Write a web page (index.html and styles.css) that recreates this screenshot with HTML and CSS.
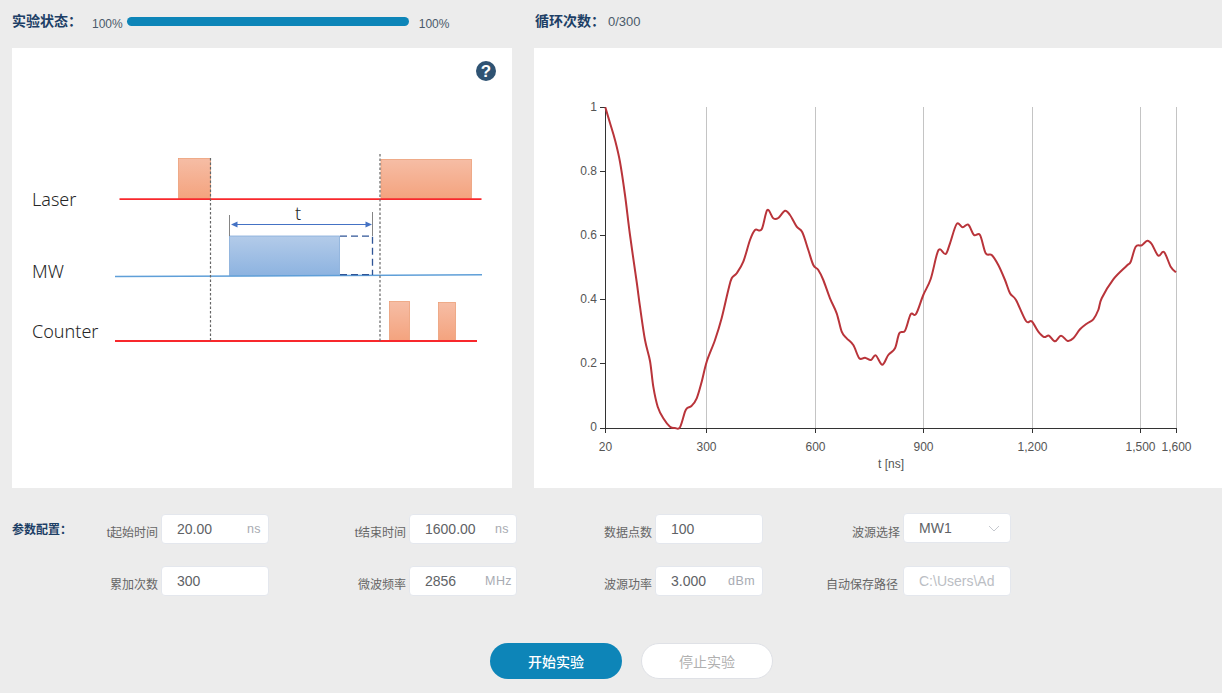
FILE: index.html
```html
<!DOCTYPE html>
<html lang="zh-CN">
<head>
  <meta charset="UTF-8" />
  <title>实验</title>
  <link rel="stylesheet" href="styles.css">
</head>
<body>
  <header class="status">
    <div class="status-left">
      <span class="title">实验状态：</span>
      <span class="pct">100%</span>
      <div class="bar"></div>
      <span class="pct pct-end">100%</span>
    </div>
    <div class="status-right">
      <span class="title">循环次数：</span>
      <span class="pct">0/300</span>
    </div>
  </header>

  <main class="panels">
    <section class="panel panel-seq">
      <svg class="seq" viewBox="12 48 500 440" width="500" height="440">
        <defs>
          <linearGradient id="orange" x1="0" y1="0" x2="0" y2="1">
            <stop offset="0" stop-color="#f6bda5"/>
            <stop offset="1" stop-color="#f4a37e"/>
          </linearGradient>
          <linearGradient id="blue" x1="0" y1="0" x2="0" y2="1">
            <stop offset="0" stop-color="#b3cbe9"/>
            <stop offset="1" stop-color="#8db3e0"/>
          </linearGradient>
        </defs>

        <circle cx="486" cy="71" r="10" fill="#2f5373"/>
        <text class="help" x="486" y="77" text-anchor="middle">?</text>

        <text class="seq-label" x="32" y="206">Laser</text>
        <text class="seq-label" x="32" y="278">MW</text>
        <text class="seq-label" x="32" y="338">Counter</text>

        <rect class="pulse" x="178.5" y="158.5" width="32" height="40"/>
        <rect class="pulse" x="381" y="159.5" width="90.5" height="39"/>
        <rect class="pulse" x="389.5" y="301.5" width="20" height="39"/>
        <rect class="pulse" x="438.5" y="302.5" width="17" height="38"/>
        <rect x="229.5" y="236" width="110" height="39.5" fill="url(#blue)" stroke="#85acd9" stroke-width="0.8"/>

        <path class="red-line" d="M119.5 199.2H481.5"/>
        <path class="red-line" d="M115 341H477"/>
        <path class="blue-line" d="M115 276.6L482 274.8"/>

        <path class="dash" d="M340 236.2H372.5V275M340 274.7H372"/>
        <path class="tick" d="M229.5 215V236M372.5 212V236"/>
        <path class="arrow" d="M236 224.5H367"/>
        <path d="M231 224.5L237.5 221.5V227.5Z" fill="#4472c4"/>
        <path d="M372 224.5L365.5 221.5V227.5Z" fill="#4472c4"/>
        <text class="seq-t" x="298" y="220" text-anchor="middle">t</text>

        <path class="dots" d="M210.5 158V341M380 154V341"/>
      </svg>
    </section>

    <section class="panel panel-chart">
      <svg class="chart" viewBox="534 48 688 440" width="688" height="440">
        <path class="split" d="M706.5 107V428M815.5 107V428M923.5 107V428M1032.5 107V428M1140.5 107V428M1176.5 107V428"/>
        <path class="axis" d="M605.5 107V428.5M600 107.5H605.5M600 171.5H605.5M600 235.5H605.5M600 299.5H605.5M600 363.5H605.5M600 428.5H1176.5"/>
        <path class="axis" d="M605.5 428V433M706.5 428V433M815.5 428V433M923.5 428V433M1032.5 428V433M1140.5 428V433M1176.5 428V433"/>

        <g class="y-labels">
          <text x="597" y="111">1</text>
          <text x="597" y="175">0.8</text>
          <text x="597" y="239">0.6</text>
          <text x="597" y="303">0.4</text>
          <text x="597" y="367">0.2</text>
          <text x="597" y="431">0</text>
        </g>
        <g class="x-labels">
          <text x="605.5" y="451">20</text>
          <text x="706.5" y="451">300</text>
          <text x="815.5" y="451">600</text>
          <text x="923.5" y="451">900</text>
          <text x="1032.5" y="451">1,200</text>
          <text x="1140.5" y="451">1,500</text>
          <text x="1176.5" y="451">1,600</text>
          <text x="891" y="468">t [ns]</text>
        </g>

        <path id="curve" class="curve"/>
      </svg>
    </section>
  </main>

  <section class="params">
    <div class="title params-title">参数配置：</div>
    <div class="params-grid">
      <div class="cell">
        <label>t起始时间</label>
        <div class="field"><input value="20.00"><span class="unit">ns</span></div>
      </div>
      <div class="cell">
        <label>t结束时间</label>
        <div class="field"><input value="1600.00"><span class="unit">ns</span></div>
      </div>
      <div class="cell">
        <label>数据点数</label>
        <div class="field"><input value="100"></div>
      </div>
      <div class="cell">
        <label>波源选择</label>
        <div class="field field-select">
          <input value="MW1">
          <svg class="caret" width="12" height="7" viewBox="0 0 12 7"><path d="M1 1L6 6L11 1" fill="none" stroke="#c6c9cf"/></svg>
        </div>
      </div>
      <div class="cell">
        <label>累加次数</label>
        <div class="field"><input value="300"></div>
      </div>
      <div class="cell">
        <label>微波频率</label>
        <div class="field"><input value="2856"><span class="unit unit-wide">MHz</span></div>
      </div>
      <div class="cell">
        <label>波源功率</label>
        <div class="field"><input value="3.000"><span class="unit">dBm</span></div>
      </div>
      <div class="cell">
        <label class="label-path">自动保存路径</label>
        <div class="field"><input placeholder="C:\Users\Ad"></div>
      </div>
    </div>
  </section>

  <div class="actions">
    <button class="btn btn-start">开始实验</button>
    <button class="btn btn-stop">停止实验</button>
  </div>

  <script src="chart.js"></script>
</body>
</html>
```

FILE: styles.css
```css
* {
  box-sizing: border-box;
}

html, body {
  height: 100%;
}

body {
  margin: 0;
  overflow: hidden;
  background-color: #ececec;
  font-family: "Liberation Sans", "Noto Sans CJK SC", sans-serif;
  color: #606266;
}

.status {
  display: flex;
  height: 48px;
  padding-left: 12px;
  padding-top: 14px;
}

.status-left {
  display: flex;
  align-items: flex-start;
  width: 523px;
}

.status-right {
  display: flex;
  align-items: flex-start;
}

.title {
  font-size: 14px;
  font-weight: 700;
  line-height: 15px;
  color: #1d3f66;
}

.pct {
  font-size: 12px;
  line-height: 20px;
  color: #4a5a6a;
}

.status-left .title {
  width: 80px;
}

.status-right .title {
  width: 73px;
}

.status-right .pct {
  font-size: 13px;
  line-height: 16px;
}

.bar {
  width: 282px;
  height: 9px;
  margin: 3px 10px 0 4px;
  border-radius: 5px;
  background-color: #0d85b8;
}

.panels {
  display: flex;
  gap: 22px;
  padding-left: 12px;
}

.panel {
  height: 440px;
  background-color: #fff;
}

.panel svg {
  display: block;
}

.panel-seq {
  width: 500px;
}

.panel-chart {
  width: 688px;
}

.help {
  font-family: "Liberation Sans", sans-serif;
  font-size: 17px;
  font-weight: 700;
  fill: #fff;
}

.seq-label {
  font-family: "Noto Sans", sans-serif;
  font-size: 18px;
  font-weight: 300;
  fill: #262626;
}

.seq-t {
  font-family: "Noto Sans", sans-serif;
  font-size: 18px;
  font-weight: 300;
  fill: #262626;
}

.pulse {
  fill: url(#orange);
  stroke: #ec9e78;
  stroke-width: 0.8;
}

.red-line {
  fill: none;
  stroke: #f8282c;
  stroke-width: 1.8;
}

.blue-line {
  fill: none;
  stroke: #5f9fd8;
  stroke-width: 1.5;
}

.dash {
  fill: none;
  stroke: #2f5597;
  stroke-width: 1.3;
  stroke-dasharray: 7 4;
}

.tick {
  fill: none;
  stroke: #777;
  stroke-width: 0.9;
}

.arrow {
  fill: none;
  stroke: #4472c4;
  stroke-width: 1.1;
}

.dots {
  fill: none;
  stroke: #666;
  stroke-width: 1.2;
  stroke-dasharray: 2.5 2;
}

.split {
  fill: none;
  stroke: #c4c4c4;
  stroke-width: 1;
}

.axis {
  fill: none;
  stroke: #333;
  stroke-width: 1;
}

.y-labels text,
.x-labels text {
  font-family: "Liberation Sans", sans-serif;
  font-size: 12px;
  fill: #555;
}

.y-labels text {
  text-anchor: end;
}

.x-labels text {
  text-anchor: middle;
}

.curve {
  fill: none;
  stroke: #b9343a;
  stroke-width: 2;
  stroke-linejoin: round;
}

.params {
  display: flex;
  margin-top: 26px;
  padding-left: 12px;
}

.params-title {
  width: 69px;
  padding-top: 9px;
  font-size: 12px;
}

.params-grid {
  display: grid;
  grid-template-columns: 188px 248px 246px 248px;
  row-gap: 22px;
}

.cell {
  display: flex;
  justify-content: flex-end;
  gap: 3px;
}

.cell label {
  padding-top: 11px;
  font-size: 12px;
  line-height: 17px;
  color: #666;
}

.cell .label-path {
  margin-right: 2px;
}

.field {
  display: flex;
  align-items: center;
  width: 108px;
  height: 30px;
  padding: 0 7px 0 15px;
  border: 1px solid #e4e7ed;
  border-radius: 4px;
  background-color: #fff;
}

.field-select {
  margin-top: -1px;
}

.field input {
  flex: 1;
  width: 100%;
  min-width: 0;
  padding: 0;
  border: none;
  outline: none;
  background: none;
  font-family: "Liberation Sans", sans-serif;
  font-size: 14px;
  color: #606266;
}

.field input::placeholder {
  color: #bbbec4;
  opacity: 1;
}

.unit {
  font-size: 12.5px;
  letter-spacing: 0.4px;
  color: #a8abb2;
}

.unit-wide {
  margin-right: -3px;
}

.caret {
  flex: none;
  margin-right: 3px;
}

.actions {
  display: flex;
  justify-content: center;
  gap: 19px;
  margin-top: 47px;
  padding-left: 41px;
}

.btn {
  width: 132px;
  height: 36px;
  border-radius: 18px;
  font-family: "Noto Sans CJK SC", sans-serif;
  font-size: 14px;
  cursor: pointer;
}

.btn-start {
  border: none;
  background-color: #0d85b8;
  color: #fff;
  font-weight: 500;
}

.btn-stop {
  border: 1px solid #dfe1e6;
  background-color: #fff;
  color: #b0b0b0;
}
```

FILE: chart.js
```js
// traced curve points, page coordinates
const pts = [
  [605.3,107.3],[610,123],[615,140],[620,162],[625,195],[630,235],[636.7,282],[640,306.7],[645,340],[650,361],
  [653.3,386.7],[657.7,406.7],[663.3,418.3],[670,426.7],[675,428],[680,427.3],[685,411.7],[687.3,408],[691.7,405.7],
  [696.7,398.3],[701.7,381.7],[706.7,361.7],[715,340],[721.7,318],[728.3,290],[731.7,278.3],[736.7,273.3],[743.3,261.7],
  [750,240],[755,230],[761.7,229.3],[767.3,210],[773.3,218.3],[778.3,218],[785,210.7],[790,215],[796.7,226.7],[802.3,232.3],
  [808.3,250],[813.3,265],[818.3,270],[823.3,280],[830,298.3],[836.7,313.3],[841.7,331.7],[846.7,338.3],[853.3,345],
  [859.3,358.3],[865,357.7],[871,360],[875.7,355.3],[882.3,364.7],[888.3,355],[895,348.3],[899.3,333.3],[905,330.7],
  [910.7,314.3],[916,314],[923.3,295],[930.7,279],[936.7,255],[940,249.3],[945.7,254],[950,243.3],[956.7,224],[962.7,227.3],
  [968.3,224.7],[974,235],[980,235],[985.7,253.3],[991.7,255],[998.3,265],[1005,280],[1010,293.3],[1016,300],[1026,321],
  [1031.7,321.3],[1038.3,331.7],[1044,337],[1049,335.7],[1055,341.3],[1061,335.7],[1067.7,341],[1073.3,338.3],[1080,329.3],
  [1086.7,323.7],[1093.3,319.3],[1098.3,310],[1101.7,298.3],[1113.3,279.3],[1126.7,265.7],[1130.7,261.7],[1135.7,246.7],
  [1141.7,245.3],[1147.3,240.7],[1151.7,244],[1158.3,255.7],[1164,252],[1170.7,266.7],[1176,272.3]
];

// catmull-rom to bezier so the line stays smooth
function smoothPath(p) {
  let d = `M${p[0][0]} ${p[0][1]}`;
  for (let i = 0; i < p.length - 1; i++) {
    const a = p[i - 1] || p[i];
    const b = p[i];
    const c = p[i + 1];
    const e = p[i + 2] || c;
    const c1x = b[0] + (c[0] - a[0]) / 6;
    const c1y = b[1] + (c[1] - a[1]) / 6;
    const c2x = c[0] - (e[0] - b[0]) / 6;
    const c2y = c[1] - (e[1] - b[1]) / 6;
    d += `C${c1x} ${c1y} ${c2x} ${c2y} ${c[0]} ${c[1]}`;
  }
  return d;
}

document.getElementById("curve").setAttribute("d", smoothPath(pts));
```
